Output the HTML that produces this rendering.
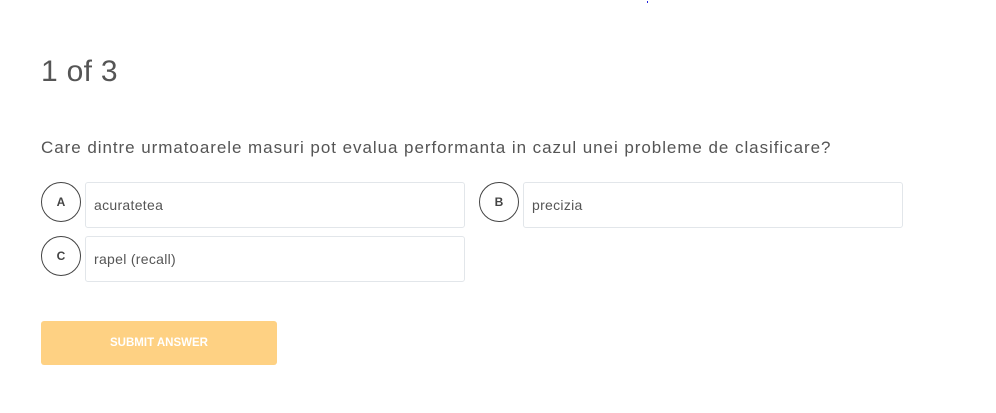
<!DOCTYPE html>
<html><head><style>
body{margin:0;width:996px;height:413px;background:#fff;font-family:"Liberation Sans",sans-serif;position:relative;overflow:hidden}
.t{position:absolute;left:41px;top:55px;font-size:30px;color:#555;letter-spacing:0.3px}
.q{position:absolute;left:41px;top:138px;font-size:17px;color:#555;letter-spacing:0.95px;white-space:nowrap}
.c{position:absolute;width:38px;height:38px;border:1px solid #444;border-radius:50%;box-sizing:content-box;text-align:center;line-height:38px;font-size:12px;font-weight:bold;color:#444}
.b{position:absolute;width:380px;height:46px;border:1px solid #e2e6ea;border-radius:3px;box-sizing:border-box;font-size:14px;color:#555;line-height:44px;padding-left:8px;letter-spacing:0.3px}
.btn{position:absolute;left:41px;top:321px;width:236px;height:44px;background:#fed183;border-radius:3px;color:#fff;font-weight:bold;font-size:11.5px;text-align:center;line-height:44px}
.dot{position:absolute;left:647px;top:1px;width:1px;height:2px;background:#22d}
</style></head><body>
<div class="dot"></div>
<div class="t">1 of 3</div>
<div class="q">Care dintre urmatoarele masuri pot evalua performanta in cazul unei probleme de clasificare?</div>
<div class="c" style="left:41px;top:182px">A</div>
<div class="b" style="left:85px;top:182px">acuratetea</div>
<div class="c" style="left:479px;top:182px">B</div>
<div class="b" style="left:523px;top:182px">precizia</div>
<div class="c" style="left:41px;top:236px">C</div>
<div class="b" style="left:85px;top:236px">rapel (recall)</div>
<div class="btn">SUBMIT ANSWER</div>
</body></html>
